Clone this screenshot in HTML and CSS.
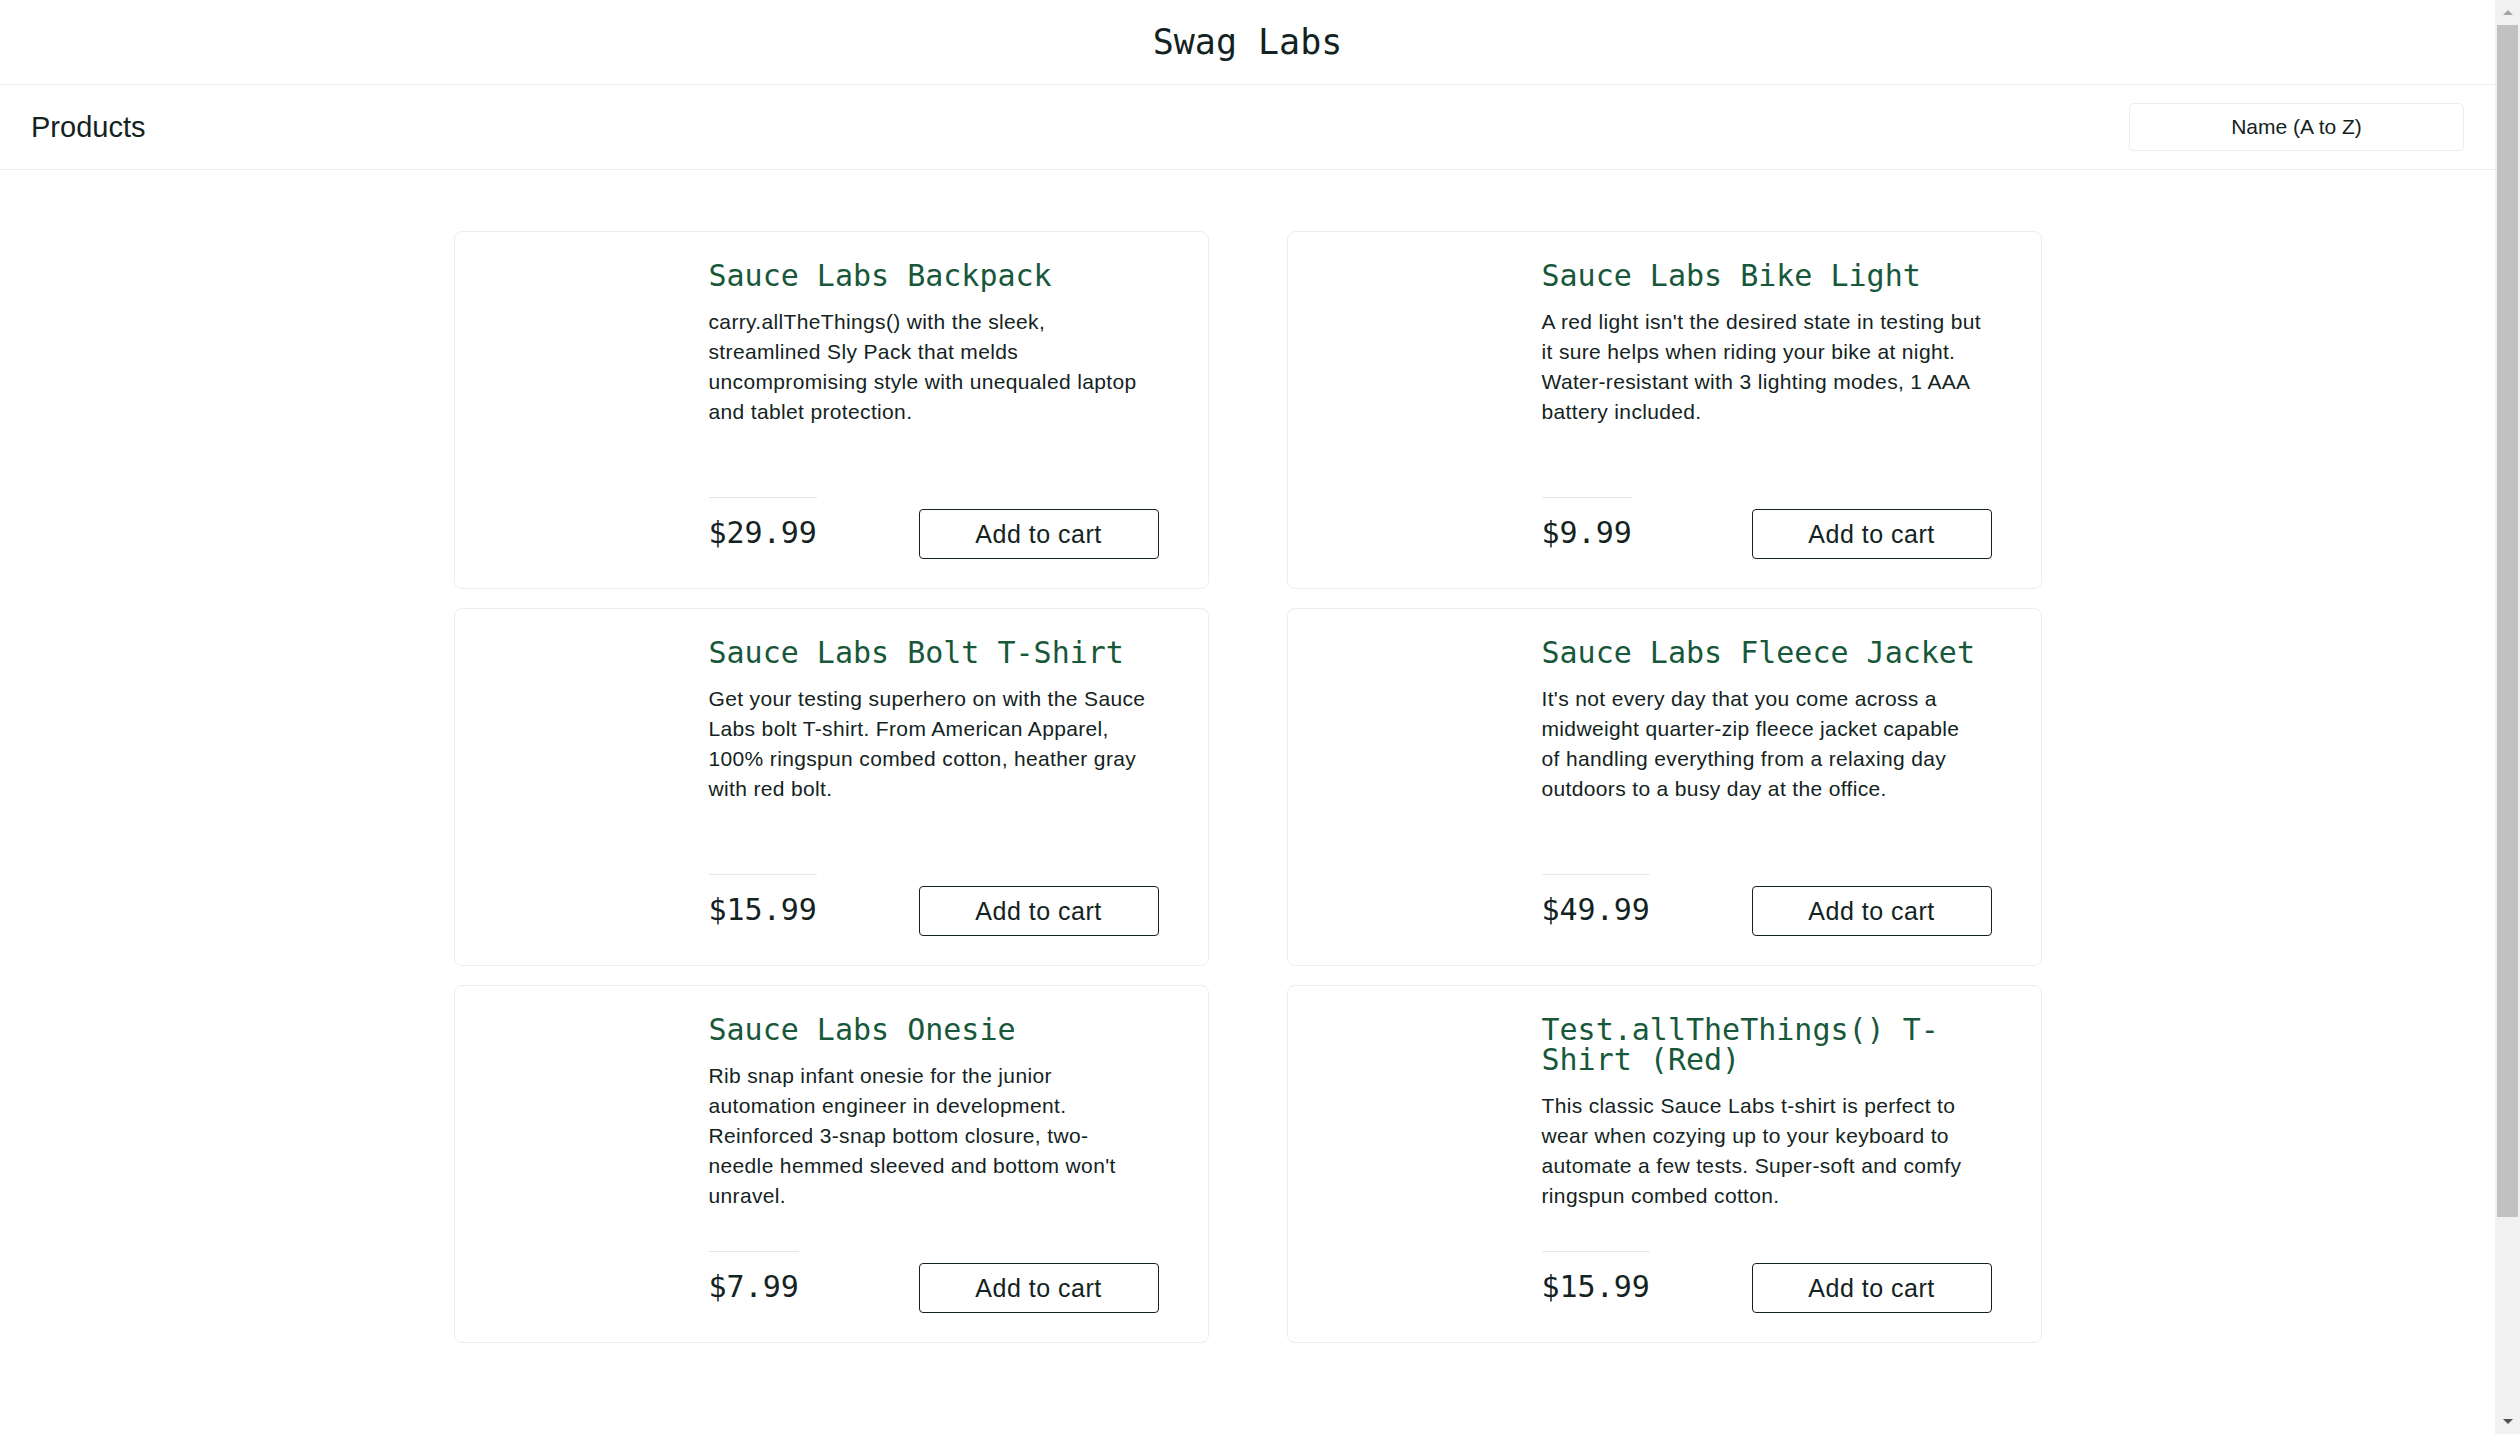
FILE: index.html
```html
<!DOCTYPE html>
<html lang="en">
<head>
<meta charset="utf-8">
<title>Swag Labs</title>
<link rel="stylesheet" href="styles.css">
</head>
<body>
<div class="window">
  <div class="page">
    <header class="app-header">
      <div class="app-logo">Swag Labs</div>
    </header>
    <div class="sub-header">
      <span class="page-title">Products</span>
      <div class="sort-select">Name (A to Z)</div>
    </div>
    <main class="inventory">
      <div class="inventory-list">
        <div class="card">
          <div class="card-img"></div>
          <div class="card-body">
            <div class="card-text">
              <div class="item-name">Sauce Labs Backpack</div>
              <div class="item-desc">carry.allTheThings() with the sleek,<br>streamlined Sly Pack that melds<br>uncompromising style with unequaled laptop<br>and tablet protection.</div>
            </div>
            <div class="pricebar">
              <div class="price">$29.99</div>
              <button class="add-btn">Add to cart</button>
            </div>
          </div>
        </div>
        <div class="card">
          <div class="card-img"></div>
          <div class="card-body">
            <div class="card-text">
              <div class="item-name">Sauce Labs Bike Light</div>
              <div class="item-desc">A red light isn't the desired state in testing but<br>it sure helps when riding your bike at night.<br>Water-resistant with 3 lighting modes, 1 AAA<br>battery included.</div>
            </div>
            <div class="pricebar">
              <div class="price">$9.99</div>
              <button class="add-btn">Add to cart</button>
            </div>
          </div>
        </div>
        <div class="card">
          <div class="card-img"></div>
          <div class="card-body">
            <div class="card-text">
              <div class="item-name">Sauce Labs Bolt T-Shirt</div>
              <div class="item-desc">Get your testing superhero on with the Sauce<br>Labs bolt T-shirt. From American Apparel,<br>100% ringspun combed cotton, heather gray<br>with red bolt.</div>
            </div>
            <div class="pricebar">
              <div class="price">$15.99</div>
              <button class="add-btn">Add to cart</button>
            </div>
          </div>
        </div>
        <div class="card">
          <div class="card-img"></div>
          <div class="card-body">
            <div class="card-text">
              <div class="item-name">Sauce Labs Fleece Jacket</div>
              <div class="item-desc">It's not every day that you come across a<br>midweight quarter-zip fleece jacket capable<br>of handling everything from a relaxing day<br>outdoors to a busy day at the office.</div>
            </div>
            <div class="pricebar">
              <div class="price">$49.99</div>
              <button class="add-btn">Add to cart</button>
            </div>
          </div>
        </div>
        <div class="card">
          <div class="card-img"></div>
          <div class="card-body">
            <div class="card-text">
              <div class="item-name">Sauce Labs Onesie</div>
              <div class="item-desc">Rib snap infant onesie for the junior<br>automation engineer in development.<br>Reinforced 3-snap bottom closure, two-<br>needle hemmed sleeved and bottom won't<br>unravel.</div>
            </div>
            <div class="pricebar">
              <div class="price">$7.99</div>
              <button class="add-btn">Add to cart</button>
            </div>
          </div>
        </div>
        <div class="card">
          <div class="card-img"></div>
          <div class="card-body">
            <div class="card-text">
              <div class="item-name">Test.allTheThings() T-<br>Shirt (Red)</div>
              <div class="item-desc">This classic Sauce Labs t-shirt is perfect to<br>wear when cozying up to your keyboard to<br>automate a few tests. Super-soft and comfy<br>ringspun combed cotton.</div>
            </div>
            <div class="pricebar">
              <div class="price">$15.99</div>
              <button class="add-btn">Add to cart</button>
            </div>
          </div>
        </div>
      </div>
    </main>
  </div>
  <div class="scrollbar" aria-hidden="true">
    <div class="sb-btn"><span class="tri-up"></span></div>
    <div class="sb-track"><div class="sb-thumb"></div></div>
    <div class="sb-btn"><span class="tri-down"></span></div>
  </div>
</div>
</body>
</html>
```
FILE: styles.css
```css
html, body {
  margin: 0;
  padding: 0;
  height: 100%;
  overflow: hidden;
  background: #ffffff;
}

body {
  font-family: "Liberation Sans", Arial, sans-serif;
  color: #132322;
}

.window {
  display: flex;
  height: 100vh;
}

.page {
  flex: 1;
  min-width: 0;
  overflow: hidden;
  background: #ffffff;
}

.app-header {
  height: 84px;
  border-bottom: 1px solid #ededed;
  display: flex;
  align-items: center;
  justify-content: center;
}

.app-logo {
  font-family: "DejaVu Sans Mono", "Liberation Mono", monospace;
  font-size: 35px;
  line-height: 35px;
  color: #132322;
  padding-top: 1px;
}

.sub-header {
  height: 84px;
  border-bottom: 1px solid #ededed;
  display: flex;
  align-items: center;
  justify-content: space-between;
  padding: 0 31px;
}

.page-title {
  font-size: 29px;
  line-height: 29px;
  color: #132322;
}

.sort-select {
  box-sizing: border-box;
  width: 335px;
  height: 48px;
  border: 1px solid #ededed;
  border-radius: 5px;
  display: flex;
  align-items: center;
  justify-content: center;
  font-size: 21px;
  color: #132322;
}

.inventory {
  padding-top: 61px;
}

.inventory-list {
  width: 1588px;
  margin: 0 auto;
  display: grid;
  grid-template-columns: 1fr 1fr;
  column-gap: 78px;
  row-gap: 19px;
}

.card {
  box-sizing: border-box;
  height: 358px;
  border: 1px solid #ededed;
  border-radius: 8px;
  display: flex;
  background: #ffffff;
}

.card-img {
  width: 254px;
  flex: none;
}

.card-body {
  flex: 1;
  min-width: 0;
  padding: 29px 49px 29px 0;
  display: flex;
  flex-direction: column;
  justify-content: space-between;
}

.item-name {
  font-family: "DejaVu Sans Mono", "Liberation Mono", monospace;
  font-size: 30px;
  line-height: 30px;
  color: #18583a;
}

.item-desc {
  margin-top: 16px;
  font-size: 21px;
  line-height: 30px;
  letter-spacing: 0.35px;
  color: #132322;
}

.pricebar {
  display: flex;
  justify-content: space-between;
  align-items: flex-start;
}

.price {
  border-top: 1px solid #e6e6e6;
  padding-top: 20px;
  font-family: "DejaVu Sans Mono", "Liberation Mono", monospace;
  font-size: 30px;
  line-height: 30px;
  color: #132322;
}

.add-btn {
  margin-top: 12px;
  box-sizing: border-box;
  width: 240px;
  height: 50px;
  border: 1px solid #132322;
  border-radius: 4px;
  background: #ffffff;
  font-family: "Liberation Sans", Arial, sans-serif;
  font-size: 25px;
  letter-spacing: 0.5px;
  color: #132322;
  padding: 0;
}

.scrollbar {
  width: 25px;
  flex: none;
  background: #f1f1f1;
  display: flex;
  flex-direction: column;
}

.sb-btn {
  height: 25px;
  flex: none;
  display: flex;
  align-items: center;
  justify-content: center;
}

.sb-track {
  flex: 1;
}

.sb-thumb {
  height: 1192px;
  margin: 0 2px;
  background: #c1c1c1;
}

.tri-up {
  width: 0;
  height: 0;
  border-left: 5px solid transparent;
  border-right: 5px solid transparent;
  border-bottom: 5px solid #a3a3a3;
}

.tri-down {
  width: 0;
  height: 0;
  border-left: 5px solid transparent;
  border-right: 5px solid transparent;
  border-top: 5px solid #505050;
}
```
